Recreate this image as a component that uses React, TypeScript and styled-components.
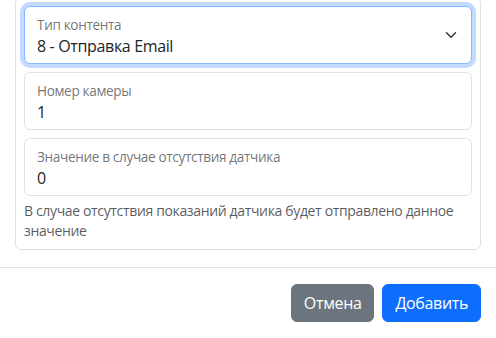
import React from "react";
import styled, { createGlobalStyle } from "styled-components";

const GlobalStyle = createGlobalStyle`
  body {
    margin: 0;
    background: #fff;
    font-family: "Open Sans", "Noto Sans", sans-serif;
    letter-spacing: -0.35px;
    color: #212529;
  }
`;

const Modal = styled.div`
  width: 496px;
  height: 338px;
  display: flex;
  flex-direction: column;
  overflow: hidden;
  background: #fff;
`;

const Body = styled.div`
  padding: 0 15px 17px 15px;
`;

const Card = styled.div`
  margin-top: -3px;
  border: 1px solid #dee2e6;
  border-radius: 6px;
  padding: 8px;
  display: flex;
  flex-direction: column;
  gap: 8px;
`;

const Field = styled.div<{ $focused?: boolean }>`
  height: 58px;
  box-sizing: border-box;
  border: 1px solid ${(p) => (p.$focused ? "#86b7fe" : "#dee2e6")};
  border-radius: 6px;
  box-shadow: ${(p) => (p.$focused ? "0 0 0 4px rgba(13, 110, 253, 0.25)" : "none")};
  padding: 9px 12px 0 12px;
  display: flex;
  align-items: flex-start;
  background: #fff;
`;

const FieldText = styled.div`
  flex: 1;
  display: flex;
  flex-direction: column;
`;

const Label = styled.span`
  font-size: 13.6px;
  line-height: 18px;
  color: rgba(33, 37, 41, 0.65);
`;

const Value = styled.span`
  font-size: 16px;
  line-height: 24px;
  color: #212529;
`;

const Chevron = styled.svg`
  width: 16px;
  height: 12px;
  align-self: center;
  margin-top: -9px;
`;

const HelpText = styled.div`
  margin-top: -3px;
  font-size: 14px;
  line-height: 20px;
  color: rgba(33, 37, 41, 0.75);
`;

const Footer = styled.div`
  border-top: 1px solid #dee2e6;
  padding: 16px 15px 16px 15px;
  display: flex;
  justify-content: flex-end;
  gap: 8px;
`;

const Button = styled.button<{ $variant: "secondary" | "primary" }>`
  font-family: inherit;
  letter-spacing: inherit;
  font-size: 16px;
  line-height: 24px;
  padding: 6px 12px;
  border-radius: 6px;
  border: 1px solid ${(p) => (p.$variant === "primary" ? "#0d6efd" : "#6c757d")};
  background: ${(p) => (p.$variant === "primary" ? "#0d6efd" : "#6c757d")};
  color: #fff;
  cursor: pointer;
`;

function App() {
  return (
    <>
      <GlobalStyle />
      <Modal>
        <Body>
          <Card>
            <Field $focused>
              <FieldText>
                <Label>Тип контента</Label>
                <Value>8 - Отправка Email</Value>
              </FieldText>
              <Chevron viewBox="0 0 16 16" preserveAspectRatio="xMidYMid meet">
                <path
                  d="m2 5 6 6 6-6"
                  fill="none"
                  stroke="#343a40"
                  strokeWidth="2"
                  strokeLinecap="round"
                  strokeLinejoin="round"
                />
              </Chevron>
            </Field>
            <Field>
              <FieldText>
                <Label>Номер камеры</Label>
                <Value>1</Value>
              </FieldText>
            </Field>
            <Field>
              <FieldText>
                <Label>Значение в случае отсутствия датчика</Label>
                <Value>0</Value>
              </FieldText>
            </Field>
            <HelpText>
              В случае отсутствия показаний датчика будет отправлено данное значение
            </HelpText>
          </Card>
        </Body>
        <Footer>
          <Button $variant="secondary">Отмена</Button>
          <Button $variant="primary">Добавить</Button>
        </Footer>
      </Modal>
    </>
  );
}

export default App;
